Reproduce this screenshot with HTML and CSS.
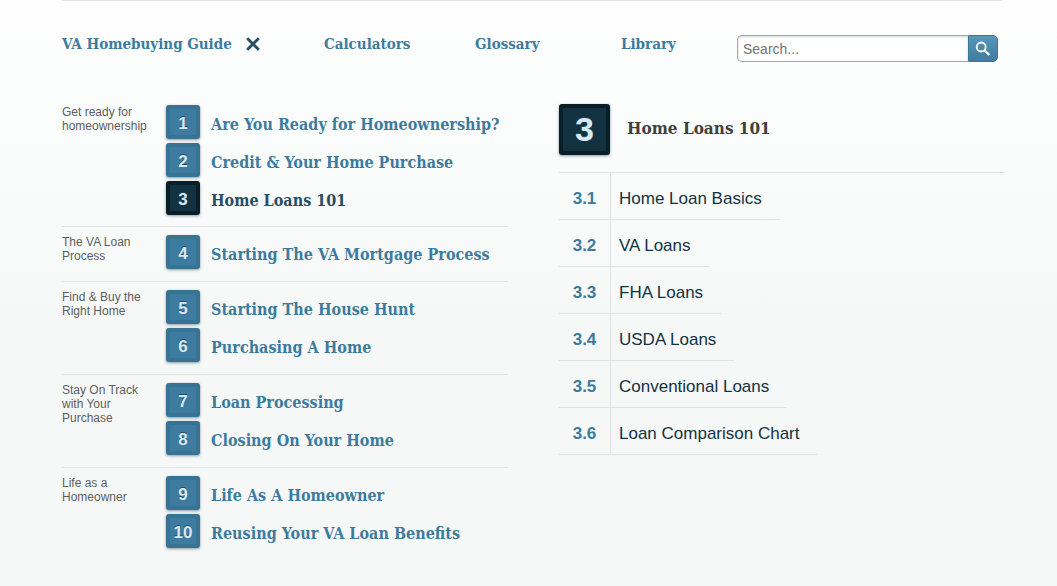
FILE: index.html
```html
<!DOCTYPE html>
<html lang="en">
<head>
<meta charset="utf-8">
<meta name="viewport" content="width=device-width, initial-scale=1">
<title>VA Homebuying Guide</title>
<link rel="stylesheet" href="styles.css">
</head>
<body>
<div class="page">
  <header class="top">
    <nav class="nav" aria-label="Main">
      <div class="nav-item">
        <a href="#guide">VA Homebuying Guide</a>
        <button class="close" type="button" aria-label="Close guide">
          <svg width="14" height="14" viewBox="0 0 14 14" aria-hidden="true"><path d="M1.2 1.2 12.8 12.8M12.8 1.2 1.2 12.8" stroke="#254e64" stroke-width="2.8" fill="none"/></svg>
        </button>
      </div>
      <a href="#calculators">Calculators</a>
      <a href="#glossary">Glossary</a>
      <a href="#library">Library</a>
      <form class="search" role="search">
        <input class="search-field" type="search" placeholder="Search..." aria-label="Search">
        <button class="search-button" type="submit" aria-label="Submit search">
          <svg width="16" height="16" viewBox="0 0 16 16" aria-hidden="true"><circle cx="6.2" cy="6" r="4.5" stroke="#fff" stroke-width="1.8" fill="none"/><path d="M9.4 9.2 14.4 14" stroke="#fff" stroke-width="2.3" fill="none"/></svg>
        </button>
      </form>
    </nav>
  </header>
  <main class="guide" id="guide">
    <div class="chapters">
      <section class="group">
        <h2 class="group-name">Get ready for homeownership</h2>
        <ul class="list">
          <li><a class="chapter" href="#c1"><span class="badge">1</span><span>Are You Ready for Homeownership?</span></a></li>
          <li><a class="chapter" href="#c2"><span class="badge">2</span><span>Credit &amp; Your Home Purchase</span></a></li>
          <li><a class="chapter current" href="#c3" aria-current="true"><span class="badge">3</span><span>Home Loans 101</span></a></li>
        </ul>
      </section>
      <section class="group">
        <h2 class="group-name">The VA Loan Process</h2>
        <ul class="list">
          <li><a class="chapter" href="#c4"><span class="badge">4</span><span>Starting The VA Mortgage Process</span></a></li>
        </ul>
      </section>
      <section class="group">
        <h2 class="group-name">Find &amp; Buy the Right Home</h2>
        <ul class="list">
          <li><a class="chapter" href="#c5"><span class="badge">5</span><span>Starting The House Hunt</span></a></li>
          <li><a class="chapter" href="#c6"><span class="badge">6</span><span>Purchasing A Home</span></a></li>
        </ul>
      </section>
      <section class="group">
        <h2 class="group-name">Stay On Track with Your Purchase</h2>
        <ul class="list">
          <li><a class="chapter" href="#c7"><span class="badge">7</span><span>Loan Processing</span></a></li>
          <li><a class="chapter" href="#c8"><span class="badge">8</span><span>Closing On Your Home</span></a></li>
        </ul>
      </section>
      <section class="group">
        <h2 class="group-name">Life as a Homeowner</h2>
        <ul class="list">
          <li><a class="chapter" href="#c9"><span class="badge">9</span><span>Life As A Homeowner</span></a></li>
          <li><a class="chapter" href="#c10"><span class="badge">10</span><span>Reusing Your VA Loan Benefits</span></a></li>
        </ul>
      </section>
    </div>
    <section class="detail" id="c3">
      <div class="detail-head">
        <span class="badge badge-large">3</span>
        <h1 class="detail-title">Home Loans 101</h1>
      </div>
      <ul class="list">
        <li><a class="topic" href="#t1"><span class="topic-number">3.1</span><span class="topic-name">Home Loan Basics</span></a></li>
        <li><a class="topic" href="#t2"><span class="topic-number">3.2</span><span class="topic-name">VA Loans</span></a></li>
        <li><a class="topic" href="#t3"><span class="topic-number">3.3</span><span class="topic-name">FHA Loans</span></a></li>
        <li><a class="topic" href="#t4"><span class="topic-number">3.4</span><span class="topic-name">USDA Loans</span></a></li>
        <li><a class="topic" href="#t5"><span class="topic-number">3.5</span><span class="topic-name">Conventional Loans</span></a></li>
        <li><a class="topic" href="#t6"><span class="topic-number">3.6</span><span class="topic-name">Loan Comparison Chart</span></a></li>
      </ul>
    </section>
  </main>
</div>
</body>
</html>
```

FILE: styles.css
```css
:root {
  --blue: #3c7b9e;
  --navy: #123241;
  --line: #e1e4e4;
  --slab: "DejaVu Serif Condensed", "DejaVu Serif", serif;
  --sans: "Liberation Sans", Arial, sans-serif;
}

* {
  box-sizing: border-box;
}

body {
  margin: 0;
  min-height: 100vh;
  background: #f6f8f8 linear-gradient(#fefefe, #fbfcfc 120px, #f6f8f8 330px) no-repeat;
  font-family: var(--sans);
}

a {
  color: inherit;
  text-decoration: none;
}

.page {
  padding: 0 52px 30px 62px;
}

.top {
  margin-right: 3px;
  padding: 34px 4px 0 0;
  border-top: 1px solid #e3e3e3;
}

.nav {
  display: grid;
  grid-template-columns: 262fr 151fr 146fr 116fr 261fr;
  color: var(--blue);
  font: bold 15px/18px var(--slab);
}

.nav-item {
  display: flex;
  align-items: flex-start;
  gap: 14px;
  white-space: nowrap;
}

.close {
  display: flex;
  padding: 2px 0 0;
  border: 0;
  background: none;
}

.search {
  display: flex;
}

.search-field {
  flex: 1;
  min-width: 0;
  height: 27px;
  margin: 0;
  padding: 0 5px;
  border: 1px solid #a3a7a8;
  border-right: 0;
  border-radius: 5px 0 0 5px;
  background: #fff;
  box-shadow: inset 0 1px 3px #d5d5d5;
  color: #666;
  font: 14px var(--sans);
  appearance: none;
}

.search-field::placeholder {
  color: #737373;
  opacity: 1;
}

.search-button {
  display: flex;
  align-items: center;
  justify-content: center;
  width: 30px;
  height: 27px;
  padding: 0;
  border: 1px solid #37789a;
  border-radius: 0 5px 5px 0;
  background: linear-gradient(#5797b9, #3f7c9f);
}

.guide {
  display: grid;
  grid-template-columns: minmax(0, 1fr) minmax(0, 1fr);
  gap: 51px;
  align-items: start;
  padding-top: 42px;
}

.group {
  display: grid;
  grid-template-columns: 94px 1fr;
  gap: 10px;
  padding-bottom: 8px;
}

.group:first-child {
  padding-top: 1px;
  padding-bottom: 7px;
}

.group + .group {
  padding-top: 8px;
  border-top: 1px solid var(--line);
}

.group-name {
  margin: 0;
  color: #5e5e5e;
  font: 12px/14px var(--sans);
}

.list {
  margin: 0;
  padding: 0;
  list-style: none;
}

.chapter {
  display: flex;
  gap: 11px;
  height: 38px;
  color: var(--blue);
  font: bold 16px/40px var(--slab);
  white-space: nowrap;
}

.current {
  color: #254e64;
}

.badge {
  flex: none;
  width: 34px;
  height: 34px;
  border: 4px solid #387393;
  border-radius: 3px;
  background: #3d7ca0;
  box-shadow: 0 1px 3px #8b989f;
  color: #d8e8f2;
  font: bold 17px/29px var(--sans);
  text-align: center;
  text-shadow: 0 -1px 0 #214a5f;
}

.current .badge,
.badge-large {
  border-color: #091f28;
  background: var(--navy);
}

.badge-large {
  width: 51px;
  height: 51px;
  font-size: 34px;
  line-height: 43px;
}

.detail-head {
  display: flex;
  gap: 17px;
  padding-bottom: 17px;
  border-bottom: 1px solid var(--line);
}

.detail-title {
  margin: 0;
  color: #404040;
  font: bold 17px/48px var(--slab);
}

.topic {
  display: flex;
  width: fit-content;
  padding-right: 18px;
  border-bottom: 1px solid var(--line);
  color: var(--navy);
  font-size: 17px;
  line-height: 41px;
}

.topic-number {
  width: 52px;
  margin-bottom: -1px;
  padding-top: 5px;
  border-right: 1px solid var(--line);
  color: var(--blue);
  font-weight: bold;
  text-align: center;
}

.topic-name {
  padding-top: 5px;
  padding-left: 8px;
}

@media (max-width: 900px) {
  .nav {
    display: flex;
    flex-wrap: wrap;
    gap: 20px;
  }

  .guide {
    grid-template-columns: 1fr;
  }
}
```
